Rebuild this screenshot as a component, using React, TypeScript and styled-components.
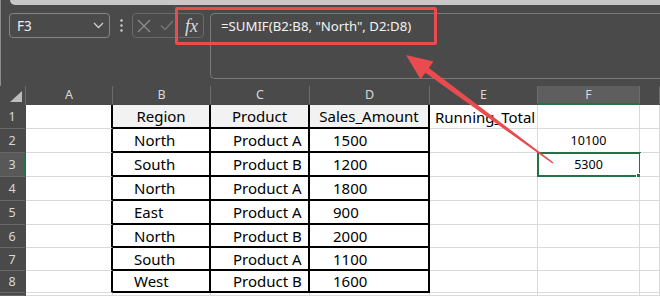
import React from "react";
import styled, { createGlobalStyle } from "styled-components";

const GlobalStyle = createGlobalStyle`
  html, body {
    margin: 0;
    padding: 0;
    background: #4a4a4a;
  }
  body {
    font-family: "Noto Sans", "Open Sans", sans-serif;
  }
`;

const Page = styled.div`
  position: relative;
  width: 660px;
  height: 296px;
  overflow: hidden;
  background: #4a4a4a;
`;

const Chrome = styled.header`
  height: 86px;
  box-sizing: border-box;
  border-left: 1px solid #8c8c8c;
`;

const TopStrip = styled.div`
  height: 5px;
  margin-left: 9px;
  background: #c8c8c8;
  border-bottom-left-radius: 6px;
`;

const Toolbar = styled.div`
  display: flex;
  align-items: flex-start;
  padding: 8px 0 0 8px;
`;

const NameBox = styled.div`
  width: 101px;
  height: 25px;
  box-sizing: border-box;
  border: 1px solid #858585;
  border-radius: 4px;
  display: flex;
  align-items: center;
  justify-content: space-between;
  padding: 0 5px 0 7px;
  color: #ededed;
  font-size: 13.5px;
`;

const Dots = styled.div`
  width: 22px;
  height: 25px;
  display: flex;
  align-items: center;
  justify-content: center;
`;

const ButtonGroup = styled.div`
  width: 72px;
  height: 25px;
  box-sizing: border-box;
  border: 1px solid #696969;
  border-radius: 4px;
  display: flex;
  align-items: center;
  padding-left: 4px;
  gap: 9px;
  margin-right: 6px;
`;

const Fx = styled.span`
  font-family: "Liberation Serif", "DejaVu Serif", serif;
  font-style: italic;
  font-size: 18px;
  color: #dcdcdc;
  margin-left: 2px;
  line-height: 1;
`;

const FormulaBox = styled.div`
  flex: 1;
  height: 66px;
  box-sizing: border-box;
  border: 1px solid #7b7b7b;
  border-right: none;
  border-radius: 5px 0 0 5px;
  padding: 3px 0 0 10px;
  color: #f2f2f2;
  font-size: 13.2px;
  line-height: 18px;
`;

const Sheet = styled.div`
  display: grid;
  grid-template-columns: 26px 87px 98px 99px 120px 108px 102px 20px;
  grid-template-rows: 19px 24px 24px 24px 24px 24px 23px 23px 22px 3px;
`;

const Corner = styled.div`
  position: relative;
  box-sizing: border-box;
  border-right: 1px solid #6a6a6a;
`;

const ColHeader = styled.div<{ $active?: boolean }>`
  box-sizing: border-box;
  display: flex;
  align-items: center;
  justify-content: center;
  font-size: 12.5px;
  color: #d8d8d8;
  background: ${({ $active }) => ($active ? "#5e5e5e" : "#4a4a4a")};
  border-right: 1px solid #6c6c6c;
  border-bottom: 2px solid ${({ $active }) => ($active ? "#217346" : "#4a4a4a")};
`;

const RowHeader = styled.div<{ $active?: boolean }>`
  box-sizing: border-box;
  display: flex;
  align-items: center;
  justify-content: center;
  overflow: hidden;
  font-size: 12.5px;
  color: #d8d8d8;
  background: ${({ $active }) => ($active ? "#585858" : "#4a4a4a")};
  border-bottom: 1px solid #686868;
  border-right: 2px solid ${({ $active }) => ($active ? "#217346" : "#4a4a4a")};
`;

const Cell = styled.div<{
  $boxed?: boolean;
  $edge?: boolean;
  $head?: boolean;
  $small?: boolean;
  $center?: boolean;
  $pad?: number;
  $selected?: boolean;
}>`
  position: relative;
  box-sizing: border-box;
  display: flex;
  align-items: center;
  justify-content: ${({ $center }) => ($center ? "center" : "flex-start")};
  padding-left: ${({ $pad }) => $pad ?? 0}px;
  white-space: nowrap;
  overflow: visible;
  background: ${({ $head }) => ($head ? "#f2f2f2" : "#ffffff")};
  color: #000;
  font-size: ${({ $small }) => ($small ? "12.5px" : "15px")};
  border-right: ${({ $boxed, $edge }) =>
    $boxed || $edge ? "2px solid #000" : "1px solid #dadada"};
  border-bottom: ${({ $boxed }) =>
    $boxed ? "2px solid #000" : "1px solid #dadada"};

  ${({ $selected }) =>
    $selected &&
    `
    &::before {
      content: "";
      position: absolute;
      left: -1px;
      top: -1px;
      right: -2px;
      bottom: -1px;
      border: 2px solid #217346;
    }
    &::after {
      content: "";
      position: absolute;
      right: -4px;
      bottom: -4px;
      width: 5px;
      height: 5px;
      background: #217346;
      border: 1px solid #fff;
    }
  `}
`;

const Highlight = styled.div`
  position: absolute;
  left: 175px;
  top: 7px;
  width: 262px;
  height: 38px;
  box-sizing: border-box;
  border: 3px solid #e94b4f;
  border-radius: 2px;
  pointer-events: none;
`;

const Overlay = styled.svg`
  position: absolute;
  left: 0;
  top: 0;
  pointer-events: none;
`;

// the last column is cut off by the window, so its letter is not shown
const columns = ["A", "B", "C", "D", "E", "F", ""];

const data: string[][] = [
  ["Region", "Product", "Sales_Amount", "Running_Total", ""],
  ["North", "Product A", "1500", "", "10100"],
  ["South", "Product B", "1200", "", "5300"],
  ["North", "Product A", "1800", "", ""],
  ["East", "Product A", "900", "", ""],
  ["North", "Product B", "2000", "", ""],
  ["South", "Product A", "1100", "", ""],
  ["West", "Product B", "1600", "", ""],
];

const pads = [21, 22, 23];

function Row({ index, values }: { index: number; values?: string[] }) {
  const head = index === 1;
  const inTable = !!values;
  return (
    <>
      <RowHeader $active={index === 3}>{values ? index : ""}</RowHeader>
      <Cell $edge={inTable} />
      {[0, 1, 2].map((c) => (
        <Cell
          key={c}
          $boxed={inTable}
          $head={head}
          $center={head}
          $pad={head ? 0 : pads[c]}
        >
          {values ? values[c] : ""}
        </Cell>
      ))}
      <Cell $pad={5}>{values ? values[3] : ""}</Cell>
      <Cell $center $small $selected={index === 3}>
        {values ? values[4] : ""}
      </Cell>
      <Cell />
    </>
  );
}

function App() {
  return (
    <Page>
      <GlobalStyle />
      <Chrome>
        <TopStrip />
        <Toolbar>
          <NameBox>
            <span>F3</span>
            <svg width="11" height="7" viewBox="0 0 11 7">
              <polyline points="1,1 5.5,5.5 10,1" fill="none" stroke="#cfcfcf" strokeWidth="1.3" />
            </svg>
          </NameBox>
          <Dots>
            <svg width="3" height="13" viewBox="0 0 3 13">
              <circle cx="1.5" cy="1.5" r="1.2" fill="#d0d0d0" />
              <circle cx="1.5" cy="6.5" r="1.2" fill="#d0d0d0" />
              <circle cx="1.5" cy="11.5" r="1.2" fill="#d0d0d0" />
            </svg>
          </Dots>
          <ButtonGroup>
            <svg width="14" height="14" viewBox="0 0 14 14">
              <path d="M1 1 L13 13 M13 1 L1 13" stroke="#8c8c8c" strokeWidth="1.4" fill="none" />
            </svg>
            <svg width="14" height="11" viewBox="0 0 14 11">
              <polyline points="1,5.5 5,9.5 13,1" fill="none" stroke="#767676" strokeWidth="1.4" />
            </svg>
            <Fx>fx</Fx>
          </ButtonGroup>
          <FormulaBox>=SUMIF(B2:B8, "North", D2:D8)</FormulaBox>
        </Toolbar>
      </Chrome>
      <Sheet>
        <Corner>
          <svg
            width="12"
            height="11"
            viewBox="0 0 12 11"
            style={{ position: "absolute", right: 3, bottom: 3 }}
          >
            <polygon points="12,0 12,11 0,11" fill="#bdbdbd" />
          </svg>
        </Corner>
        {columns.map((c, i) => (
          <ColHeader key={i} $active={c === "F"}>
            {c}
          </ColHeader>
        ))}
        {data.map((values, i) => (
          <Row key={i} index={i + 1} values={values} />
        ))}
        <Row index={9} />
      </Sheet>
      <Highlight />
      <Overlay width="660" height="296" viewBox="0 0 660 296">
        <polygon points="427.2,66.8 553.5,162.4 552.5,163.6 423.6,71.6" fill="#e94b4f" />
        <polygon points="406,55 433.5,61.5 420.5,79.3" fill="#e94b4f" />
      </Overlay>
    </Page>
  );
}

export default App;
